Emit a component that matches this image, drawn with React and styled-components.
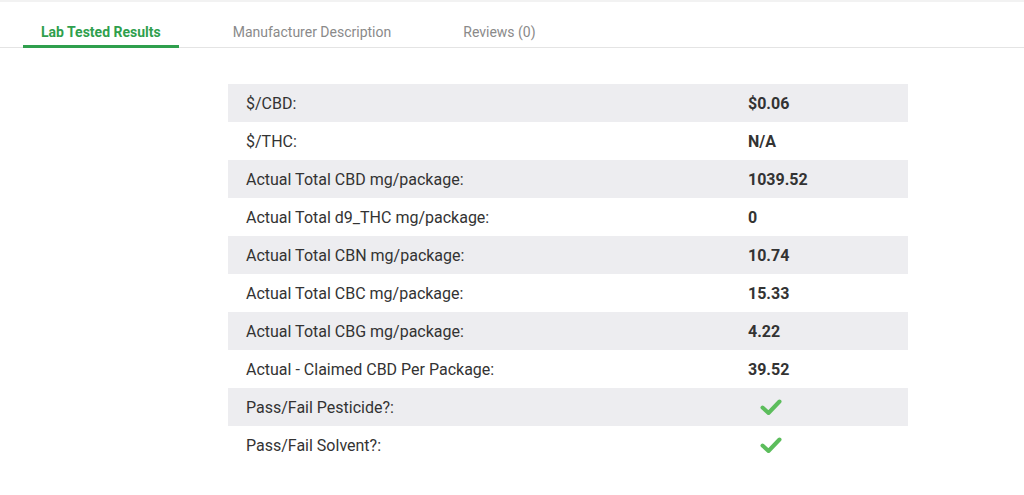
import React from 'react';
import styled, { createGlobalStyle } from 'styled-components';

const GlobalStyle = createGlobalStyle`
    body {
        margin: 0;
        background: #fff;
        font-family: Roboto, "Liberation Sans", Arial, sans-serif;
    }
`;

const rows = [
    { label: '$/CBD:', value: '$0.06' },
    { label: '$/THC:', value: 'N/A' },
    { label: 'Actual Total CBD mg/package:', value: '1039.52' },
    { label: 'Actual Total d9_THC mg/package:', value: '0' },
    { label: 'Actual Total CBN mg/package:', value: '10.74' },
    { label: 'Actual Total CBC mg/package:', value: '15.33' },
    { label: 'Actual Total CBG mg/package:', value: '4.22' },
    { label: 'Actual - Claimed CBD Per Package:', value: '39.52' },
    { label: 'Pass/Fail Pesticide?:', check: true },
    { label: 'Pass/Fail Solvent?:', check: true },
];

const tabs = ['Lab Tested Results', 'Manufacturer Description', 'Reviews (0)'];

const Page = styled.div`
    width: 1024px;
    height: 495px;
    border-top: 2px solid #f2f2f2;
    box-sizing: border-box;
`;

const TabBar = styled.div`
    display: flex;
    gap: 36px;
    margin-top: 22px;
    padding-left: 23px;
    border-bottom: 1px solid #e4e4e4;
`;

const Tab = styled.div`
    padding: 0 18px 4px;
    font-size: 14px;
    line-height: 17px;
    font-weight: ${(p) => (p.active ? 700 : 400)};
    color: ${(p) => (p.active ? '#2f9f4d' : '#8a8a8a')};
    border-bottom: 3px solid ${(p) => (p.active ? '#2f9f4d' : 'transparent')};
    margin-bottom: -1px;
`;

const Table = styled.div`
    width: 680px;
    margin: 36px 0 0 228px;
`;

const Row = styled.div`
    display: grid;
    grid-template-columns: 502px 1fr;
    height: 38px;
    align-items: center;
    background: ${(p) => (p.shaded ? '#ededf0' : '#fff')};
    color: #333;
    font-size: 16px;
`;

const Label = styled.div`
    padding-left: 18px;
`;

const Value = styled.div`
    padding-left: 18px;
    font-weight: 700;
    display: flex;
    align-items: center;
`;

const Check = () => (
    <svg width="22" height="17" viewBox="0 0 22 17" style={{ marginLeft: 12 }}>
        <path d="M2.5 8.5 L8.5 14 L19.5 2.5" fill="none" stroke="#5cbd5c" strokeWidth="4" strokeLinecap="round" strokeLinejoin="round" />
    </svg>
);

const App = () => {
    return (<Page>
        <GlobalStyle />
        <TabBar>
            {tabs.map((t, i) => (
                <Tab key={t} active={i === 0}>{t}</Tab>
            ))}
        </TabBar>
        <Table>
            {rows.map((r, i) => (
                <Row key={r.label} shaded={i % 2 === 0}>
                    <Label>{r.label}</Label>
                    <Value>{r.check ? <Check /> : r.value}</Value>
                </Row>
            ))}
        </Table>
    </Page>);
};

export default App;
